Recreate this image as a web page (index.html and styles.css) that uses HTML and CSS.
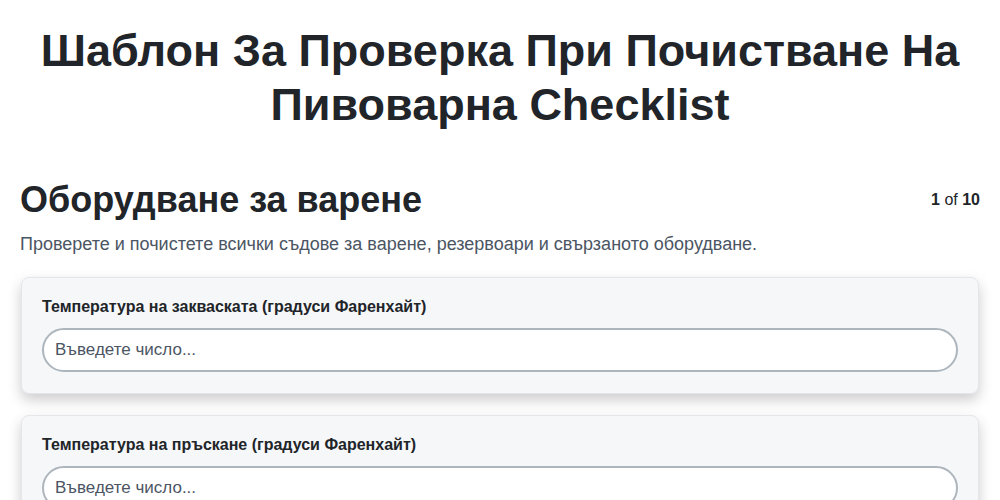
FILE: index.html
```html
<!DOCTYPE html>
<html lang="bg">
<head>
    <meta charset="UTF-8">
    <title>Шаблон За Проверка При Почистване На Пивоварна Checklist</title>
    <link rel="stylesheet" href="styles.css">
</head>
<body>
  <div class="page">
      <h1 class="page-title">Шаблон За Проверка При Почистване На Пивоварна Checklist</h1>

      <div class="section">
          <div class="section-head">
              <h2 class="section-title">Оборудване за варене</h2>
              <p class="section-count"><b>1</b> of <b>10</b></p>
          </div>
          <p class="section-desc">Проверете и почистете всички съдове за варене, резервоари и свързаното оборудване.</p>

          <div class="field-card">
              <label class="field-label" for="f1">Температура на закваската (градуси Фаренхайт)</label>
              <input class="field-input" id="f1" type="number" placeholder="Въведете число...">
          </div>
          <div class="field-card">
              <label class="field-label" for="f2">Температура на пръскане (градуси Фаренхайт)</label>
              <input class="field-input" id="f2" type="number" placeholder="Въведете число...">
          </div>
      </div>
  </div>
</body>
</html>
```

FILE: styles.css
```css
                                /*General Style*/

*
{
    box-sizing: border-box;
    margin: 0;
    padding: 0;
    font-family: "Liberation Sans", Arial, sans-serif;
    color: #212529;
}
body
{
    background-color: #ffffff;
}
.page
{
    padding: 24px 20px 0;
}

                                /*HEADER*/

.page-title
{
    font-size: 45px;
    line-height: 54px;
    font-weight: 700;
    text-align: center;
    margin-bottom: 46px;
}

                                /*SECTION*/

.section-head
{
    display: flex;
    justify-content: space-between;
    align-items: center;
}
.section-title
{
    font-size: 36px;
    line-height: 44px;
    font-weight: 700;
}
.section-count
{
    font-size: 16px;
}
.section-count b
{
    font-weight: 700;
}
.section-desc
{
    font-size: 18px;
    line-height: 22px;
    color: #4b5563;
    margin-top: 11px;
    margin-bottom: 22px;
}

                                /*FIELDS*/

.field-card
{
    background-color: #f6f7f9;
    border: 1px solid #e4e6ea;
    border-radius: 8px;
    padding: 20px 20px 21px;
    margin: 0 1px 21px;
    box-shadow: 0 6px 14px rgba(0, 0, 0, 0.2);
}
.field-label
{
    display: block;
    font-size: 16px;
    font-weight: 700;
    line-height: 18px;
    margin-bottom: 12px;
}
.field-input
{
    display: block;
    width: 100%;
    height: 44px;
    border: 2px solid #adb5bd;
    border-radius: 22px;
    background-color: #ffffff;
    padding: 0 11px;
    font-size: 17px;
    outline: none;
}
.field-input::placeholder
{
    color: #4b5563;
}
```
